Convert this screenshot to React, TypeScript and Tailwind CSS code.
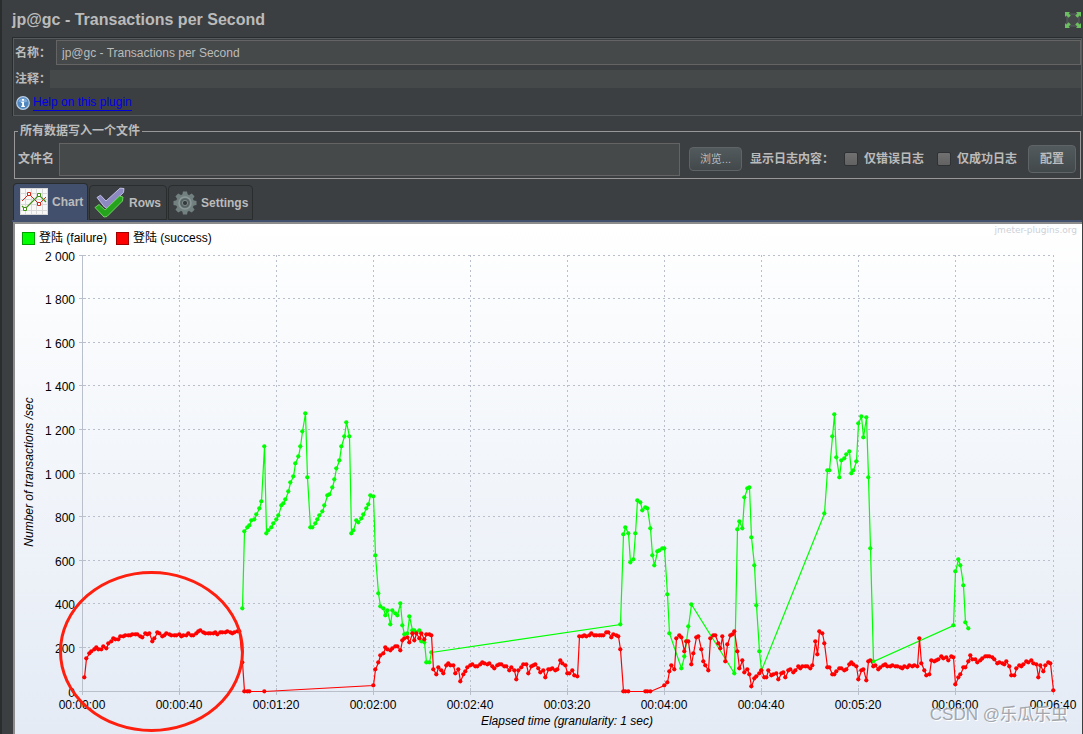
import React from "react";

type Run = { start: number; values: number[] };

const PLOT_LEFT = 82;
const STEP = 2.4275;

const xAt = (second: number) => Math.floor(PLOT_LEFT + second * STEP);

const toPoints = (runs: Run[]): [number, number][] =>
  runs.flatMap((run) =>
    run.values.map((y, i): [number, number] => [xAt(run.start + i), y]),
  );

const success = toPoints([
  {
    start: 1,
    values: [
      677, 658, 653, 651, 649, 647, 649, 649, 646, 648, 643, 641, 638, 639, 639, 636, 636, 635, 635, 635,
      634, 634, 634, 636, 637, 633, 634, 633, 641, 638, 632, 633, 636, 635, 633, 634, 635, 635, 635, 634,
      636, 635, 635, 633, 635, 635, 633, 631, 630, 632, 633, 633, 633, 633, 632, 634, 632, 632, 632, 631,
      632, 633, 632, 631, 631, 662, 691, 691, 691,
    ],
  },
  { start: 75, values: [691] },
  {
    start: 120,
    values: [
      685, 669, 662, 655, 653, 647, 649, 650, 648, 646, 646, 650, 640, 638, 637, 642, 633, 640, 633, 638,
      633, 639, 634, 634, 635, 669, 674, 667, 670, 673, 665, 663, 665, 665, 673, 669, 681, 674, 671, 667,
      665, 664, 666, 666, 664, 662, 663, 664, 663, 666, 668, 665, 664, 664, 666, 666, 670, 667, 670, 679,
      670, 667, 664, 664, 673, 666, 665, 664, 668, 672, 670, 677, 669, 669, 668, 670, 669, 660, 663, 665,
      673, 673, 670, 675, 676, 636, 636, 635, 636, 635, 633, 635, 635, 635, 635, 635, 632, 632, 637, 634,
      635, 636, 649, 691, 691, 691,
    ],
  },
  { start: 232, values: [691, 691, 691] },
  {
    start: 240,
    values: [
      685, 682, 671, 665, 669, 638, 635, 637, 651, 641, 641, 664, 653, 637, 636, 649, 661, 665, 670, 638,
      635, 635, 643, 648, 636, 661, 644, 635, 634, 631, 651, 668, 660, 672, 669, 674, 686, 678, 676, 673,
      670, 677, 677, 670, 675, 674, 673, 679, 673, 672, 677, 670, 669, 672, 670, 666, 668, 666, 666, 666,
      668, 665, 641, 654, 631, 633, 643, 667, 667, 674, 674, 671, 668, 668, 670, 669, 664, 662, 664, 666,
      679, 670, 669, 680, 661, 660, 666, 665, 669,
    ],
  },
  {
    start: 329,
    values: [
      667, 665, 664, 666, 666, 665, 666, 666, 667, 668, 666, 667, 665, 666, 665, 666, 638, 663, 670, 675,
      674, 660, 661, 660, 659, 656, 658, 657, 660, 656, 657, 684, 677, 674, 667, 667, 661, 655, 659, 659,
      662, 660, 658, 656, 656, 656, 657, 659, 663, 662, 663, 664, 661, 666, 675, 675, 668, 665, 666, 664,
      661, 662, 660, 663, 664, 677, 665, 671, 665, 662, 663, 690,
    ],
  },
]);

const failure = toPoints([
  {
    start: 66,
    values: [
      608, 531, 527, 525, 520, 519, 514, 508, 501, 446, 533, 530, 527, 523, 519, 515, 505, 503, 499, 491,
      482, 476, 463, 456, 446, 431, 413, 477, 527, 527, 523, 519, 515, 511, 505, 495, 494, 487, 479, 468,
      460, 446, 436, 422, 436, 533, 530, 520, 522, 518, 514, 508, 504, 495, 496, 555, 593, 606, 608, 615,
      610, 624, 610, 613, 615, 603, 625, 634, 633, 616, 630, 630, 632, 630, 641, 642, 662, 662, 652,
    ],
  },
  {
    start: 222,
    values: [
      624, 534, 527, 533, 562, 559, 533, 500, 502, 510, 507, 508, 528, 555, 565, 551, 550, 548, 548, 594, 633,
    ],
  },
  { start: 247, values: [668, 656, 641, 626, 604] },
  { start: 269, values: [673, 529, 521, 528, 497, 488, 487, 537, 565, 605, 651, 670] },
  {
    start: 306,
    values: [513, 470, 470, 436, 414, 457, 477, 460, 458, 454, 451, 473, 470, 461, 423, 416, 437, 417, 477, 548, 661],
  },
  { start: 359, values: [625, 571, 559, 565, 585, 622, 628] },
]);

const yTicks: [string, number][] = [
  ["2 000", 255],
  ["1 800", 298],
  ["1 600", 342],
  ["1 400", 385],
  ["1 200", 429],
  ["1 000", 473],
  ["800", 516],
  ["600", 560],
  ["400", 603],
  ["200", 647],
  ["0", 691],
];

const xTicks: [string, number][] = [
  ["00:00:00", 82],
  ["00:00:40", 179],
  ["00:01:20", 276],
  ["00:02:00", 373],
  ["00:02:40", 470],
  ["00:03:20", 567],
  ["00:04:00", 664],
  ["00:04:40", 761],
  ["00:05:20", 858],
  ["00:06:00", 955],
  ["00:06:40", 1053],
];

function Series({ points, color }: { points: [number, number][]; color: string }) {
  return (
    <g fill={color} stroke={color}>
      <polyline
        fill="none"
        strokeWidth="1.2"
        points={points.map(([x, y]) => `${x + 0.5},${y + 0.5}`).join(" ")}
      />
      {points.map(([x, y]) => (
        <circle key={x} cx={x + 0.3} cy={y + 0.3} r="2.1" stroke="none" />
      ))}
    </g>
  );
}

function TransactionsChart() {
  return (
    <svg viewBox="15 247 1067 488" className="block w-full" fontSize="12" role="img" aria-label="Transactions per second">
      <g stroke="#b9c0cc" strokeWidth="1">
        {yTicks.slice(0, -1).map(([label, y]) => (
          <line key={label} x1="83" x2="1053" y1={y + 0.5} y2={y + 0.5} strokeDasharray="2 3" />
        ))}
        {xTicks.slice(1).map(([label, x]) => (
          <line key={label} x1={x + 0.5} x2={x + 0.5} y1="255" y2="691" strokeDasharray="2 3" />
        ))}
        {yTicks.map(([label, y]) => (
          <line key={label} x1="79" x2="86" y1={y + 0.5} y2={y + 0.5} />
        ))}
        {xTicks.map(([label, x]) => (
          <line key={label} x1={x + 0.5} x2={x + 0.5} y1="688" y2="695" />
        ))}
        <path d="M82.500 255V695M79 691.500H1053" fill="none" />
      </g>
      <g fill="#000">
        {yTicks.map(([label, y]) => (
          <text key={label} x="75" y={y + 6} textAnchor="end">
            {label}
          </text>
        ))}
        {xTicks.map(([label, x]) => (
          <text key={label} x={x} y="709" textAnchor="middle">
            {label}
          </text>
        ))}
        <text x="567" y="725" textAnchor="middle" fontStyle="italic">
          Elapsed time (granularity: 1 sec)
        </text>
        <text transform="translate(33 472) rotate(-90)" textAnchor="middle" fontStyle="italic">
          Number of transactions /sec
        </text>
      </g>
      <Series points={failure} color="#00ff00" />
      <Series points={success} color="#ff0000" />
      <ellipse cx="151.5" cy="651.5" rx="91" ry="79" fill="none" stroke="#ff1f0f" strokeWidth="3" />
    </svg>
  );
}

function FullscreenIcon() {
  return (
    <svg viewBox="0 0 16 16" className="h-4 w-4">
      <rect x="2" y="2" width="12" height="12" fill="#45494a" stroke="#5c6164" />
      <g fill="#6cbf5f">
        <path d="M0 0h5L3.600 1.400 5.800 3.600 3.600 5.800 1.400 3.600 0 5z" />
        <path d="M16 0v5l-1.400-1.400-2.200 2.200-2.200-2.200 2.200-2.200L11 0z" />
        <path d="M0 16v-5l1.400 1.400 2.200-2.200 2.200 2.200-2.200 2.200L5 16z" />
        <path d="M16 16h-5l1.400-1.400-2.200-2.200 2.200-2.200 2.200 2.200L16 11z" />
      </g>
    </svg>
  );
}

function InfoIcon() {
  return (
    <svg viewBox="0 0 14 14" className="h-3.5 w-3.5">
      <circle cx="7" cy="7" r="6.300" fill="#4f86c0" stroke="#b9cfe6" strokeWidth="1.200" />
      <path d="M2.500 5.500A4.800 4.800 0 0 1 11.500 5.500Q7 7.500 2.500 5.500z" fill="#7fabd8" />
      <path d="M6 3h2v1.700H6zM5.300 5.700H8v4h.9v1.200H5.200V9.700h.9V6.900h-.8z" fill="#fff" />
    </svg>
  );
}

function ChartIcon() {
  return (
    <svg viewBox="0 0 28 28" className="h-7 w-7 shrink-0">
      <rect width="28" height="27" fill="#f8f8f8" />
      <path
        d="M.5 0v27M5.500 0v27M11.500 0v27M16.500 0v27M22.500 0v27M27.500 0v27M0 .5h28M0 5.500h28M0 11.500h28M0 16.500h28M0 22.500h28M0 26.500h28"
        stroke="#d9d9d9"
      />
      <path d="M2 13 9 6 19 16 26 9" fill="none" stroke="#d02a1c" />
      <path d="M2 18 5 21 19 7 26 14" fill="none" stroke="#3f8f12" strokeWidth="1.200" />
      <g fill="#fff">
        <path d="M7.500 4.500h3v3h-3zM17.500 14.500h3v3h-3z" stroke="#d02a1c" />
        <path d="M3.500 19.500h3v3h-3zM17.500 5.500h3v3h-3z" stroke="#3f8f12" />
      </g>
    </svg>
  );
}

function RowsIcon() {
  return (
    <svg viewBox="0 0 31 31" className="h-[31px] w-[31px] shrink-0">
      <path
        d="M3 10.500 6.500 8.200 12 14 26 1.200 30 1.500 29.500 5.500 13 21.500 10.500 20z"
        fill="#8d8ac2"
        stroke="#c9c7ea"
        strokeWidth=".9"
        strokeLinejoin="round"
      />
      <path
        d="M1 20.500 5 17.500 11 23 25.500 9 29 10 28.500 14 13 29.500 10 30z"
        fill="#26a31c"
        stroke="#79d86a"
        strokeWidth=".9"
        strokeLinejoin="round"
      />
    </svg>
  );
}

function GearIcon() {
  const teeth = [0, 45, 90, 135, 180, 225, 270, 315];
  return (
    <svg viewBox="-12 -12 24 24" className="h-6 w-6 shrink-0">
      <g fill="#728080">
        {teeth.map((angle) => (
          <path key={angle} d="M-2.800-8 -2-11.500H2L2.800-8z" transform={`rotate(${angle})`} />
        ))}
        <circle r="9" />
      </g>
      <circle r="6" fill="none" stroke="#8c9999" strokeWidth="1.500" />
      <circle r="4.800" fill="#566263" />
      <circle r="2.600" fill="#353a3b" stroke="#8c9999" strokeWidth=".8" />
    </svg>
  );
}

function LogFilter({ id, label }: { id: string; label: string }) {
  return (
    <div className="flex items-center gap-1.5">
      <input
        id={id}
        type="checkbox"
        className="h-3.5 w-3.5 appearance-none rounded-xs border border-[#2f3234] bg-linear-to-b from-[#717171] to-[#626262]"
      />
      <label htmlFor={id} className="font-bold">
        {label}
      </label>
    </div>
  );
}

export default function App() {
  const buttonStyle =
    "shrink-0 rounded-sm border border-[#5f6467] bg-linear-to-b from-[#525a5d] to-[#43494b]";

  return (
    <div className="border-l-2 border-[#2a2d2e] bg-[#3c3f41] pl-2.5 font-['Liberation_Sans','Noto_Sans_CJK_SC',sans-serif] text-xs text-[#bbbbbb]">
      <header className="flex h-[37px] items-center justify-between pt-[3px] pr-0.5">
        <h1 className="text-base font-bold">jp@gc - Transactions per Second</h1>
        <button type="button" aria-label="Fullscreen">
          <FullscreenIcon />
        </button>
      </header>

      <section className="mr-px border-t border-l border-[#2a2d2e]">
        <div className="flex h-[78px] flex-col border border-[#565a5c] pt-px">
          <div className="flex items-center">
            <label htmlFor="name" className="w-[42px] shrink-0 pl-px font-bold">
              名称：
            </label>
            <input
              id="name"
              type="text"
              defaultValue="jp@gc - Transactions per Second"
              className="h-[25px] min-w-0 flex-1 border border-[#646464] bg-[#45494a] px-[5px]"
            />
          </div>
          <div className="mt-[5px] flex items-center">
            <label htmlFor="comment" className="w-9 shrink-0 pl-px font-bold whitespace-nowrap">
              注释：
            </label>
            <input id="comment" type="text" className="h-[18px] min-w-0 flex-1 bg-[#45494a] px-1" />
          </div>
          <div className="mt-1.5 flex items-center gap-[3px] pl-0.5">
            <InfoIcon />
            <a href="#help" className="border-b border-[#0000d8] leading-4 text-[#0000e6]">
              Help on this plugin
            </a>
          </div>
        </div>
      </section>

      <fieldset className="mt-1.5 mr-0.5 ml-0.5 border border-[#989898] pr-1 pl-[3px]">
        <legend className="px-0.5 leading-[18px] font-bold">所有数据写入一个文件</legend>
        <div className="flex h-[38px] items-start">
          <label htmlFor="filename" className="w-[41px] shrink-0 pt-[9px] leading-5 font-bold">
            文件名
          </label>
          <input
            id="filename"
            type="text"
            className="mt-[3px] h-[33px] min-w-0 flex-1 border border-[#646464] bg-[#45494a] px-1"
          />
          <div className="flex h-[38px] shrink-0 items-center pl-[9px]">
            <button type="button" className={`${buttonStyle} h-6 w-[53px] text-[11px]`}>
              浏览...
            </button>
            <span className="w-[102px] pl-2 font-bold">显示日志内容：</span>
            <div className="flex items-center gap-[13px]">
              <LogFilter id="errors" label="仅错误日志" />
              <LogFilter id="successes" label="仅成功日志" />
            </div>
            <button type="button" className={`${buttonStyle} ml-[11px] h-7 w-12 font-bold`}>
              配置
            </button>
          </div>
        </div>
      </fieldset>

      <div role="tablist" className="mt-1 flex h-[37px] items-end gap-px pl-px text-xs font-bold">
        <button
          type="button"
          role="tab"
          aria-selected="true"
          className="flex h-full w-[75px] items-center gap-1 rounded-t-sm border border-b-0 border-[#2a2d2e] bg-[#43506d] pl-1.5"
        >
          <ChartIcon />
          Chart
        </button>
        <button
          type="button"
          role="tab"
          aria-selected="false"
          className="flex h-[35px] w-[78px] items-center gap-1 rounded-t-sm border border-[#2a2d2e] pl-1"
        >
          <RowsIcon />
          Rows
        </button>
        <button
          type="button"
          role="tab"
          aria-selected="false"
          className="flex h-[35px] w-[85px] items-center gap-1 rounded-t-sm border border-[#2a2d2e] pl-1"
        >
          <GearIcon />
          Settings
        </button>
      </div>

      <main className="mr-px border-t-2 border-[#43506d]">
        <div className="relative ml-px border-t-2 border-l-2 border-[#8c8c8c] bg-linear-to-b from-white to-[#e4ebf5] text-black">
          <div className="flex h-[23px] items-start justify-between pt-1.5 pr-[5px] pl-[7px] leading-4">
            <ul className="flex gap-[9px]">
              <li className="flex items-center gap-1">
                <span className="h-[13px] w-[13px] border border-[#00a000] bg-[#00ff00]" />
                登陆 (failure)
              </li>
              <li className="flex items-center gap-1">
                <span className="h-[13px] w-[13px] border border-[#a00000] bg-[#ff0000]" />
                登陆 (success)
              </li>
            </ul>
            <span className="-mt-1.5 font-['DejaVu_Sans',sans-serif] text-[9px] leading-3 text-[#cdd1d8]">jmeter-plugins.org</span>
          </div>
          <TransactionsChart />
          <span className="absolute right-3.5 bottom-2 text-[17px] leading-6 text-[#a3a7ad] [text-shadow:1px_1px_0_#ffffff]">
            CSDN @乐瓜乐虫
          </span>
        </div>
      </main>
    </div>
  );
}
